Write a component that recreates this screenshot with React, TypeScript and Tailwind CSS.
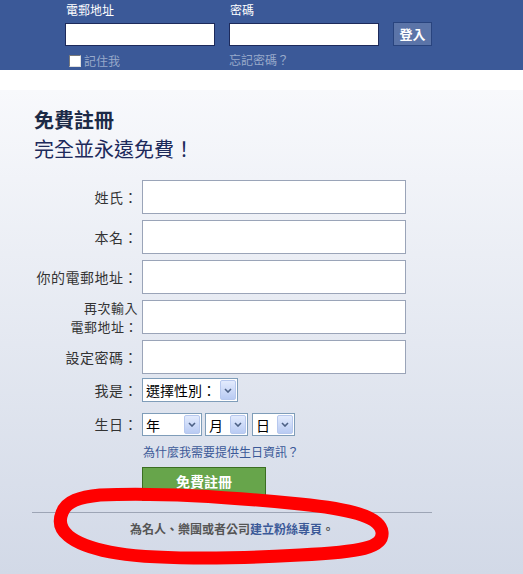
import React from "react";

const font = { fontFamily: '"Noto Sans CJK TC", "Noto Sans", sans-serif' };

function Chevron() {
  return (
    <svg width="8" height="5" viewBox="0 0 8 5" className="block">
      <path d="M1 1 L4 4 L7 1" fill="none" stroke="#4d6185" strokeWidth="1.6" />
    </svg>
  );
}

function FakeSelect({ label, width, height }: { label: string; width: string; height: string }) {
  return (
    <div className={`${width} ${height} flex items-center justify-between border border-[#7f9db9] bg-white pl-[3px] pr-px`}>
      <span className="text-[14px] leading-[16px] text-black">{label}</span>
      <div className="flex h-[calc(100%-2px)] w-[16px] items-center justify-center rounded-[2px] border border-[#b7c8ee] bg-gradient-to-b from-[#e3ebfd] to-[#b9cbf3]">
        <Chevron />
      </div>
    </div>
  );
}

function Row({ label, children }: { label: React.ReactNode; children: React.ReactNode }) {
  return (
    <div className="flex items-center">
      <div className="w-[104px] shrink-0 text-right text-[14px] leading-[17px] tracking-[0.5px] text-[#333]">{label}</div>
      <div className="ml-[4px]">{children}</div>
    </div>
  );
}

function TextBox() {
  return <div className="h-[34px] w-[264px] border border-[#9aa4b8] bg-white" />;
}

export default function App() {
  return (
    <div className="relative h-[574px] w-[523px] overflow-hidden bg-white" style={font}>
      {/* Header */}
      <div className="flex h-[70px] bg-[#3b5998] pl-[65px] pt-[3px]">
        <div className="w-[164px]">
          <div className="pl-px text-[12px] leading-[14px] text-white">電郵地址</div>
          <div className="mt-[6px] h-[23px] w-[150px] border border-[#1d2a5b] bg-white" />
          <div className="mt-[8px] flex items-center pl-[4px]">
            <div className="h-[12px] w-[12px] border border-t-[#7a7a7a] border-l-[#7a7a7a] border-b-[#e0e0e0] border-r-[#e0e0e0] bg-white" />
            <span className="ml-[3px] text-[12px] leading-[14px] text-[#98a9ca]">記住我</span>
          </div>
        </div>
        <div className="w-[164px]">
          <div className="pl-px text-[12px] leading-[14px] text-white">密碼</div>
          <div className="mt-[6px] h-[23px] w-[150px] border border-[#1d2a5b] bg-white" />
          <div className="mt-[7px] text-[12px] leading-[14px] text-[#98a9ca]">忘記密碼？</div>
        </div>
        <div className="mt-[19px] flex h-[24px] w-[39px] items-center justify-center border border-[#29447e] bg-[#5b74a8] text-[13px] font-bold text-white">
          登入
        </div>
      </div>

      <div className="h-[20px] bg-white" />

      {/* Body */}
      <div className="h-[484px] bg-gradient-to-b from-[#f8f9fc] to-[#d2d9e7] pl-[34px] pt-[18px]">
        <h1 className="text-[20px] font-bold leading-[24px] text-[#1c2a47]">免費註冊</h1>
        <p className="mt-[5px] text-[20px] leading-[24px] text-[#1d2a5b]">完全並永遠免費！</p>

        <div className="mt-[19px] flex flex-col gap-[6px]">
          <Row label="姓氏：">
            <TextBox />
          </Row>
          <Row label="本名：">
            <TextBox />
          </Row>
          <Row label="你的電郵地址：">
            <TextBox />
          </Row>
          <Row
            label={
              <div className="my-[-2px] flex flex-col items-end">
                <span className="block text-[13px] leading-[19px]">再次輸入</span>
                <span className="block text-[13px] leading-[19px]">電郵地址：</span>
              </div>
            }
          >
            <TextBox />
          </Row>
          <Row label="設定密碼：">
            <TextBox />
          </Row>
        </div>

        <div className="mt-[4px]">
          <Row label="我是：">
            <FakeSelect label="選擇性別：" width="w-[96px]" height="h-[24px]" />
          </Row>
        </div>

        <div className="mt-[11px]">
          <Row label="生日：">
            <div className="flex">
              <FakeSelect label="年" width="w-[60px]" height="h-[23px]" />
              <div className="ml-[3px]">
                <FakeSelect label="月" width="w-[43px]" height="h-[23px]" />
              </div>
              <div className="ml-[4px]">
                <FakeSelect label="日" width="w-[43px]" height="h-[23px]" />
              </div>
            </div>
          </Row>
        </div>

        <div className="ml-[109px] mt-[9px] text-[12px] leading-[14px] text-[#3b5998]">為什麼我需要提供生日資訊？</div>

        <div className="ml-[108px] mt-[8px] flex h-[34px] w-[124px] items-center justify-center border border-[#3b6e22] bg-[#67a54b] pb-[7px] text-[14px] font-bold leading-[16px] text-white">
          免費註冊
        </div>

        <div className="ml-[-2px] mt-[11px] h-px w-[400px] bg-[#9da5b5]" />

        <div className="ml-[-2px] mt-[8px] w-[400px] text-center text-[12px] font-bold leading-[16px] text-[#555]">
          為名人、樂團或者公司<span className="text-[#3b5998]">建立粉絲專頁</span>。
        </div>
      </div>

      {/* hand-drawn annotation */}
      <svg className="pointer-events-none absolute left-0 top-0" width="523" height="574" viewBox="0 0 523 574">
        <defs>
          <filter id="soft">
            <feGaussianBlur stdDeviation="0.7" />
          </filter>
        </defs>
        <path
          d="M100 495 C160 492 240 498 300 504 C350 509 380 516 382 532 C384 548 360 552 300 555 C230 559 150 560 110 552 C70 544 55 530 62 513 C66 501 80 497 100 495 Z"
          fill="none"
          stroke="#ff0000"
          strokeWidth="13"
          strokeLinecap="round"
          strokeLinejoin="round"
          filter="url(#soft)"
        />
      </svg>
    </div>
  );
}
